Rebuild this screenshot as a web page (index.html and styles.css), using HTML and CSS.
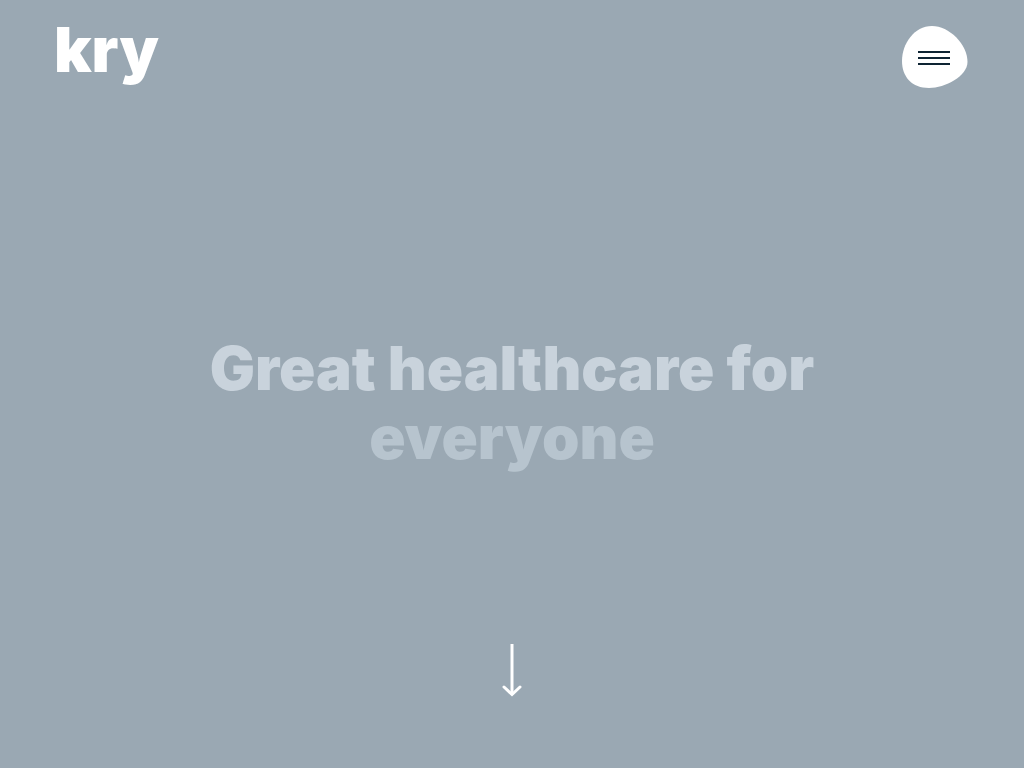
FILE: index.html
```
<!DOCTYPE html>
<html lang="en">
<head>
    <meta charset="UTF-8">
    <meta name="viewport" content="width=device-width, initial-scale=1.0">
    <title>Kry</title>
    <link rel="stylesheet" href="styles.css">
</head>
<body>

<header class="site-header">
    <a class="logo" href="#">kry</a>
    <button class="menu-button" type="button" aria-label="Menu">
        <svg class="menu-icon" viewBox="0 0 66 62" aria-hidden="true">
            <path class="blob" d="M30 0C47 0 65.500 18 65.500 36C65.500 50 43 62 27 62C10 62 0 51 0 35C0 18 12 0 30 0Z"/>
            <path class="bars" d="M16 26H48M16 32H48M16 38H48"/>
        </svg>
    </button>
</header>

<main class="hero">
    <h1 class="hero-title">
        <span class="line">Great healthcare for</span>
        <span class="line line-late">everyone</span>
    </h1>
</main>

<footer class="scroll">
    <a class="scroll-link" href="#" aria-label="Scroll down">
        <svg class="arrow" viewBox="0 0 20 54" aria-hidden="true">
            <path class="shaft" d="M10 1V51"/>
            <path class="head" d="M2 44L10 51.500L18 44"/>
        </svg>
    </a>
</footer>

</body>
</html>
```
FILE: styles.css
```
* {
    box-sizing: border-box;
}

body {
    display: flex;
    flex-direction: column;
    min-height: 100vh;
    margin: 0;
    background: #9aa8b3;
    color: #fff;
    font-family: Inter, "Noto Sans", sans-serif;
}

.site-header {
    display: flex;
    justify-content: space-between;
    align-items: flex-start;
    padding: 26px 56px 26px 54px;
}

.logo {
    color: #fff;
    font-size: 62px;
    font-weight: 900;
    line-height: 48px;
    text-decoration: none;
}

.menu-button {
    padding: 0;
    border: 0;
    background: none;
    cursor: pointer;
}

.menu-icon {
    display: block;
    width: 66px;
    height: 62px;
}

.blob {
    fill: #fff;
}

.bars {
    stroke: #0e2433;
    stroke-width: 2;
}

.hero {
    display: flex;
    flex: 1;
    align-items: center;
    justify-content: center;
    padding: 56px 56px 8px;
}

.hero-title {
    margin: 0;
    font-size: 60px;
    font-weight: 900;
    line-height: 69px;
    text-align: center;
}

.line {
    display: block;
    color: #c9d3dc;
}

.line-late {
    color: #b7c4ce;
}

.scroll {
    display: flex;
    justify-content: center;
    padding-bottom: 71px;
}

.arrow {
    display: block;
    width: 20px;
    height: 54px;
    fill: none;
    stroke: #fff;
    stroke-width: 3;
}

.head {
    stroke-linecap: round;
}
```
